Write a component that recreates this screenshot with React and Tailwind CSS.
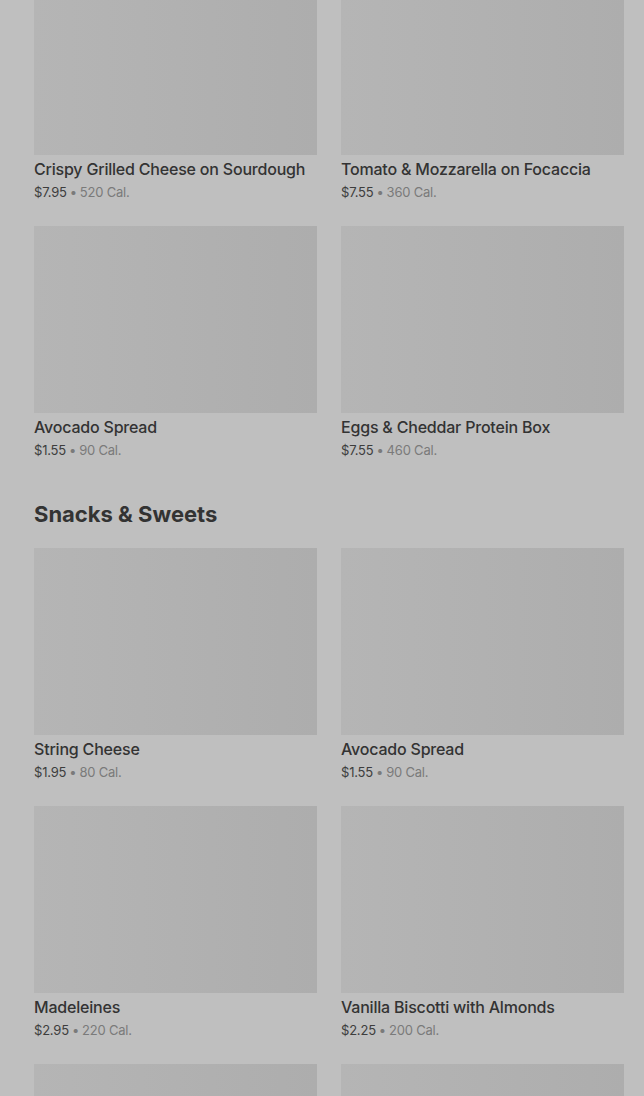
import React from "react";

const sections = [
  {
    title: null,
    items: [
      { name: "Crispy Grilled Cheese on Sourdough", price: "$7.95", cal: "520 Cal." },
      { name: "Tomato & Mozzarella on Focaccia", price: "$7.55", cal: "360 Cal." },
      { name: "Avocado Spread", price: "$1.55", cal: "90 Cal." },
      { name: "Eggs & Cheddar Protein Box", price: "$7.55", cal: "460 Cal." },
    ],
  },
  {
    title: "Snacks & Sweets",
    items: [
      { name: "String Cheese", price: "$1.95", cal: "80 Cal." },
      { name: "Avocado Spread", price: "$1.55", cal: "90 Cal." },
      { name: "Madeleines", price: "$2.95", cal: "220 Cal." },
      { name: "Vanilla Biscotti with Almonds", price: "$2.25", cal: "200 Cal." },
      null,
      null,
    ],
  },
];

function Card({ item }) {
  return (
    <div className="flex flex-col">
      <div className="h-[187px] w-full bg-gradient-to-r from-[#b5b5b5] to-[#adadad]" />
      {item && (
        <>
          <div className="mt-[4px] text-[16px] leading-[20px] font-medium text-[#333333] tracking-[-0.2px]">
            {item.name}
          </div>
          <div className="mt-[3px] text-[13px] leading-[20px] text-[#7a7a7a] tracking-[-0.2px]">
            <span className="text-[#3d3d3d]">{item.price}</span>
            <span className="mx-[3px]">•</span>
            {item.cal}
          </div>
        </>
      )}
    </div>
  );
}

export default function App() {
  return (
    <div
      className="w-[644px] h-[1096px] overflow-hidden bg-[#bfbfbf]"
      style={{ fontFamily: "Inter, 'Noto Sans', sans-serif" }}
    >
      <div className="-mt-[32px] pl-[34px] pr-[20px] flex flex-col">
        {sections.map((s, i) => (
          <div key={i} className="flex flex-col">
            {s.title && (
              <h2 className="mt-[40px] mb-[20px] text-[22px] leading-[28px] font-bold text-[#333333] tracking-[0px]">
                {s.title}
              </h2>
            )}
            <div className="grid grid-cols-2 gap-x-[24px] gap-y-[24px]">
              {s.items.map((it, j) => (
                <Card key={j} item={it} />
              ))}
            </div>
          </div>
        ))}
      </div>
    </div>
  );
}
